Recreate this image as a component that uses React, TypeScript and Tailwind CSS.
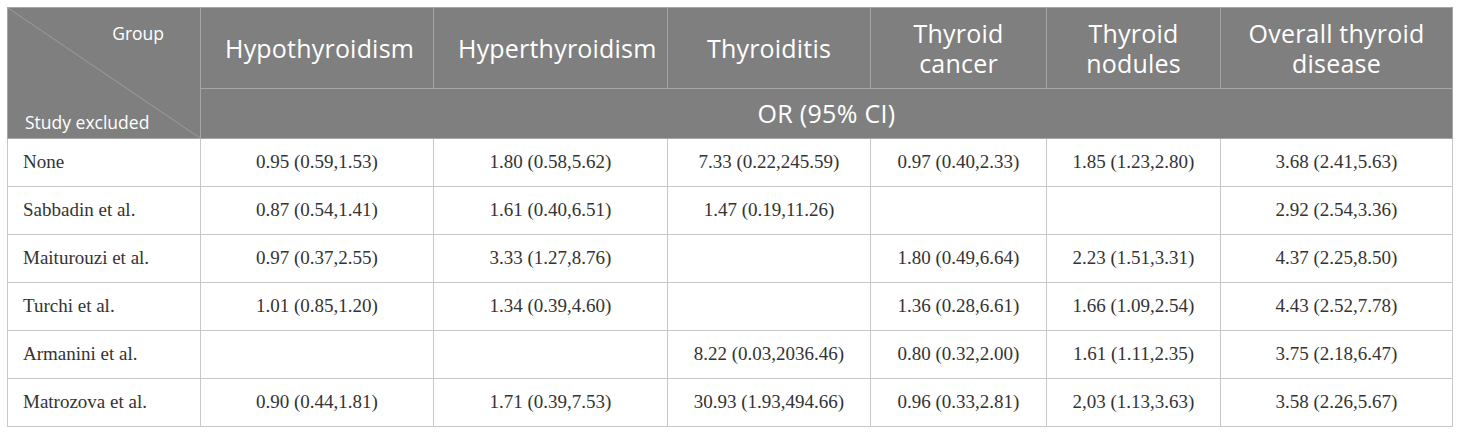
const groups = [
  'Hypothyroidism',
  'Hyperthyroidism',
  'Thyroiditis',
  'Thyroid cancer',
  'Thyroid nodules',
  'Overall thyroid disease',
];

const rows: [string, string[]][] = [
  ['None', ['0.95 (0.59,1.53)', '1.80 (0.58,5.62)', '7.33 (0.22,245.59)', '0.97 (0.40,2.33)', '1.85 (1.23,2.80)', '3.68 (2.41,5.63)']],
  ['Sabbadin et al.', ['0.87 (0.54,1.41)', '1.61 (0.40,6.51)', '1.47 (0.19,11.26)', '', '', '2.92 (2.54,3.36)']],
  ['Maiturouzi et al.', ['0.97 (0.37,2.55)', '3.33 (1.27,8.76)', '', '1.80 (0.49,6.64)', '2.23 (1.51,3.31)', '4.37 (2.25,8.50)']],
  ['Turchi et al.', ['1.01 (0.85,1.20)', '1.34 (0.39,4.60)', '', '1.36 (0.28,6.61)', '1.66 (1.09,2.54)', '4.43 (2.52,7.78)']],
  ['Armanini et al.', ['', '', '8.22 (0.03,2036.46)', '0.80 (0.32,2.00)', '1.61 (1.11,2.35)', '3.75 (2.18,6.47)']],
  ['Matrozova et al.', ['0.90 (0.44,1.81)', '1.71 (0.39,7.53)', '30.93 (1.93,494.66)', '0.96 (0.33,2.81)', '2,03 (1.13,3.63)', '3.58 (2.26,5.67)']],
];

const widths = ['w-[193px]', 'w-[233px]', 'w-[234px]', 'w-[203px]', 'w-[176px]', 'w-[174px]', 'w-[232px]'];

const cell = "border border-[#c8c8c8] font-['Liberation_Serif',serif] text-[19px] text-[#333]";

export default function App() {
  return (
    <div className="bg-white w-[1460px] h-[436px] pt-[7px] pl-[7px]">
      <table className="table-fixed border-collapse w-[1446px]">
        <colgroup>
          {widths.map((w, i) => (
            <col key={i} className={w} />
          ))}
        </colgroup>
        <thead className="bg-[#7f7f7f] text-white">
          <tr className="h-[80px]">
            <th rowSpan={2} className="relative border border-[#a6a6a6] p-0 font-normal font-['Open_Sans',sans-serif]">
              <svg className="absolute inset-0 w-full h-full" preserveAspectRatio="none" viewBox="0 0 100 100">
                <line x1="0" y1="0" x2="100" y2="100" stroke="#9c9c9c" strokeWidth="1" vectorEffect="non-scaling-stroke" />
              </svg>
              <div className="relative flex flex-col justify-between h-[130px] text-[17.5px] leading-5">
                <span className="self-end pr-[36px] pt-[15px]">Group</span>
                <span className="self-start pl-[17px] pb-[6px]">Study excluded</span>
              </div>
            </th>
            {groups.map((g) => (
              <th
                key={g}
                className="border border-[#a6a6a6] font-normal font-['Open_Sans',sans-serif] text-[25px] leading-[30px] tracking-[0.2px] px-6"
              >
                {g}
              </th>
            ))}
          </tr>
          <tr className="h-[50px]">
            <th colSpan={6} className="border border-[#a6a6a6] font-normal font-['Open_Sans',sans-serif] text-[25px] tracking-[0.3px]">
              OR (95% CI)
            </th>
          </tr>
        </thead>
        <tbody>
          {rows.map(([name, vals]) => (
            <tr key={name} className="h-[48px]">
              <td className={`${cell} pl-[15px]`}>{name}</td>
              {vals.map((v, i) => (
                <td key={i} className={`${cell} text-center`}>
                  {v}
                </td>
              ))}
            </tr>
          ))}
        </tbody>
      </table>
    </div>
  );
}
